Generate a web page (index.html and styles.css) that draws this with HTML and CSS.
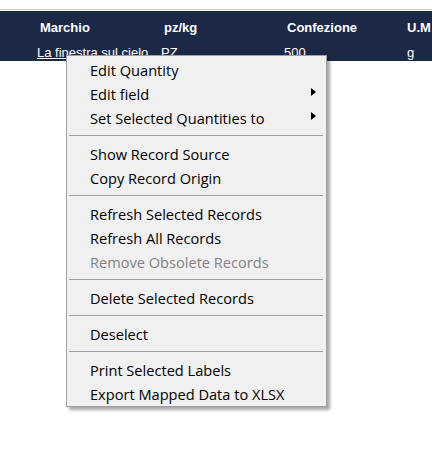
FILE: index.html
```html
<!DOCTYPE html>
<html lang="it">
<head>
  <meta charset="UTF-8">
  <title>Records</title>
  <link rel="stylesheet" href="styles.css">
</head>
<body>

<div class="topline"></div>

<div class="band">
  <div class="cols head">
    <div>Marchio</div>
    <div>pz/kg</div>
    <div>Confezione</div>
    <div class="last">U.M</div>
  </div>
  <div class="cols row">
    <div><span class="ul">La finestra sul cielo</span></div>
    <div><span class="ul">PZ</span></div>
    <div><span class="ul">500</span></div>
    <div>g</div>
  </div>
</div>

<!-- context menu -->
<div class="menu">
  <div class="item">Edit Quantity</div>
  <div class="item">Edit field<span class="arrow"></span></div>
  <div class="item">Set Selected Quantities to<span class="arrow"></span></div>
  <div class="sep"></div>
  <div class="item">Show Record Source</div>
  <div class="item">Copy Record Origin</div>
  <div class="sep"></div>
  <div class="item">Refresh Selected Records</div>
  <div class="item">Refresh All Records</div>
  <div class="item disabled">Remove Obsolete Records</div>
  <div class="sep"></div>
  <div class="item">Delete Selected Records</div>
  <div class="sep"></div>
  <div class="item">Deselect</div>
  <div class="sep"></div>
  <div class="item">Print Selected Labels</div>
  <div class="item">Export Mapped Data to XLSX</div>
</div>

</body>
</html>
```

FILE: styles.css
```css
* { margin: 0; padding: 0; box-sizing: border-box; }
body {
  background: #fff;
  font-family: "Liberation Sans", Arial, sans-serif;
}
.topline {
  margin-top: 9px;
  height: 1px;
  background: #d4d4d4;
}
.band {
  margin-top: 1px;
  height: 50px;
  overflow: hidden;
  background: #1c2946;
  color: #fff;
  font-size: 13px;
  padding-top: 9px;
}
.cols {
  display: grid;
  grid-template-columns: 124px 123px 123px 1fr;
  padding-left: 37px;
  line-height: 15px;
  white-space: nowrap;
}
.head {
  font-weight: bold;
}
.head div {
  padding-left: 3px;
}
.head .last {
  padding-left: 0;
}
.row {
  margin-top: 10px;
}
.ul {
  text-decoration: underline;
}
/* context menu */
.menu {
  position: absolute;
  left: 66px;
  top: 55px;
  width: 261px;
  background: #f0f0f0;
  border: 1px solid #a0a0a0;
  box-shadow: 3px 3px 3px rgba(0, 0, 0, 0.35);
  padding: 1px 0 1px 0;
  font-family: "Open Sans", "Noto Sans", sans-serif;
  font-size: 14.6px;
  color: #000;
}
.item {
  position: relative;
  height: 24px;
  line-height: 27px;
  padding-left: 23px;
  white-space: nowrap;
}
.item.disabled {
  color: #838383;
}
.arrow {
  position: absolute;
  right: 10px;
  top: 7px;
  width: 0;
  height: 0;
  border-top: 4px solid transparent;
  border-bottom: 4px solid transparent;
  border-left: 5px solid #000;
}
.sep {
  height: 1px;
  background: #a0a0a0;
  margin: 6px 3px 5px 2px;
}
```
